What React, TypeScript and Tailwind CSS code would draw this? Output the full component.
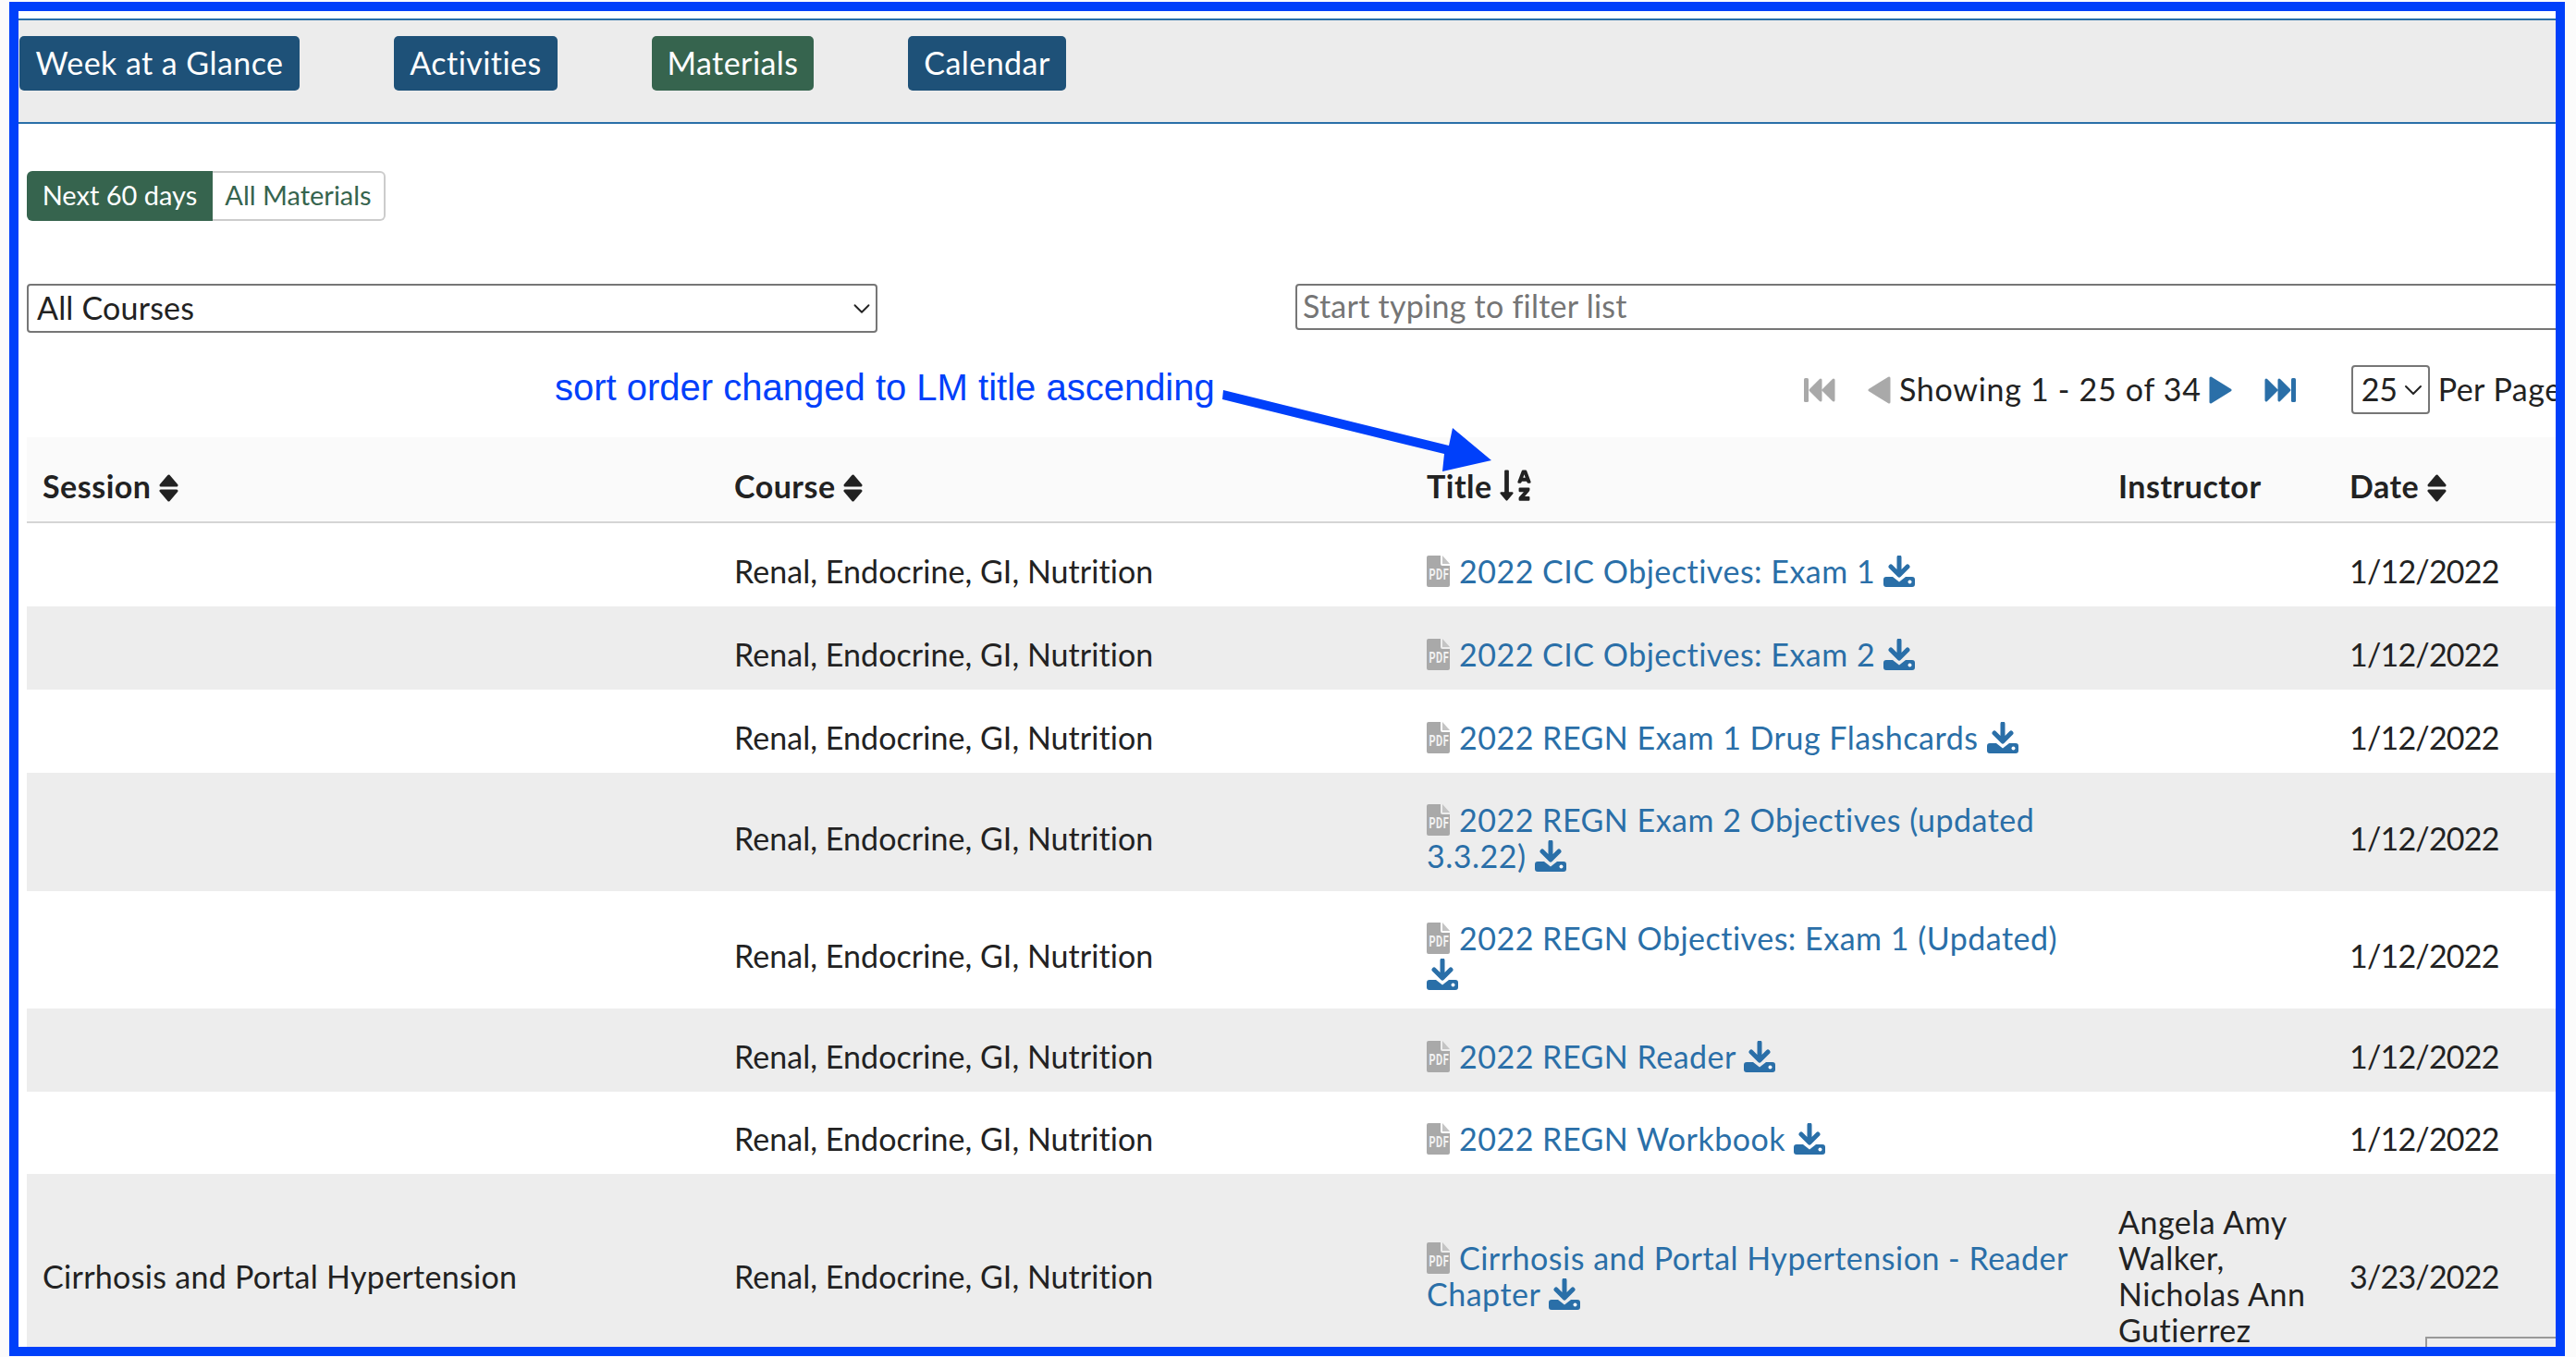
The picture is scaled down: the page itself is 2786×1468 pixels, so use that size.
import { ChevronDown } from "lucide-react"
import { FaSortAlphaDown } from "react-icons/fa"

type Row = {
  session?: string
  title: string
  instructor?: string[]
  date: string
  height: string
}

const rows: Row[] = [
  { title: "2022 CIC Objectives: Exam 1", date: "1/12/2022", height: "h-[91px]" },
  { title: "2022 CIC Objectives: Exam 2", date: "1/12/2022", height: "h-[90px]" },
  { title: "2022 REGN Exam 1 Drug Flashcards", date: "1/12/2022", height: "h-[90px]" },
  { title: "2022 REGN Exam 2 Objectives (updated 3.3.22)", date: "1/12/2022", height: "h-[128px]" },
  { title: "2022 REGN Objectives: Exam 1 (Updated)", date: "1/12/2022", height: "h-[127px]" },
  { title: "2022 REGN Reader", date: "1/12/2022", height: "h-[90px]" },
  { title: "2022 REGN Workbook", date: "1/12/2022", height: "h-[89px]" },
  {
    session: "Cirrhosis and Portal Hypertension",
    title: "Cirrhosis and Portal Hypertension - Reader Chapter",
    instructor: ["Angela Amy", "Walker,", "Nicholas Ann", "Gutierrez"],
    date: "3/23/2022",
    height: "h-[208px]",
  },
]

function PdfIcon() {
  return (
    <svg viewBox="0 0 25 34" className="mr-[10px] inline-block h-[34px] w-[25px] align-[-4px]">
      <path d="M2 0h13v9a2 2 0 0 0 2 2h8v21a2 2 0 0 1-2 2H2a2 2 0 0 1-2-2V2a2 2 0 0 1 2-2z" fill="#a9a9a9" />
      <path d="M17 0l8 9h-8z" fill="#c4c4c4" />
      <text transform="translate(2.500 26) scale(1 1.45)" fontSize="11" fontWeight="700" fill="#f2f2f2" fontFamily="Roboto, sans-serif">PDF</text>
    </svg>
  )
}

function DownloadIcon() {
  return (
    <svg viewBox="0 0 34 34" className="inline-block h-[34px] w-[34px] align-[-4px]" fill="#2a6fa8">
      <path d="M17 2v18M8 12l9 9 9-9" fill="none" stroke="#2a6fa8" strokeWidth="5" strokeLinecap="round" strokeLinejoin="round" />
      <path d="M3 23h7l7 5.500 7-5.500h7a3 3 0 0 1 3 3v5a3 3 0 0 1-3 3H3a3 3 0 0 1-3-3v-5a3 3 0 0 1 3-3z" />
      <circle cx="28.500" cy="28.500" r="2" fill="#fff" />
    </svg>
  )
}

function SortIcon() {
  return (
    <svg viewBox="0 0 21 30" className="inline-block h-[30px] w-[21px] align-[-4px]" fill="#222222">
      <path d="M10.500 2 L19 12 H2 Z M2 18 H19 L10.500 28 Z" stroke="#222222" strokeWidth="3" strokeLinejoin="round" />
    </svg>
  )
}

function Triangle({ flip, color }: { flip?: boolean; color: string }) {
  return (
    <svg viewBox="0 0 26 30" className={flip ? "h-[30px] w-[26px] rotate-180" : "h-[30px] w-[26px]"}>
      <path d="M24 2 L24 28 L3 15 Z" fill={color} stroke={color} strokeWidth="3" strokeLinejoin="round" />
    </svg>
  )
}

function SkipIcon({ flip, color }: { flip?: boolean; color: string }) {
  return (
    <svg viewBox="0 0 34 28" className={flip ? "h-[28px] w-[34px] rotate-180" : "h-[28px] w-[34px]"}>
      <rect x="0" y="1" width="5" height="26" rx="1.500" fill={color} />
      <path d="M18 3v22L7 14z M32 3v22L21 14z" fill={color} stroke={color} strokeWidth="3" strokeLinejoin="round" />
    </svg>
  )
}

export default function App() {
  return (
    <div className="relative h-[1468px] w-full overflow-hidden bg-[#fbfbfb] pt-[2px] pl-[10px] font-['Lato',sans-serif] text-[34px] text-[#222222]">
      <div className="relative h-[1465px] w-[2764px] overflow-hidden border-[10px] border-[#0040fa] bg-white pt-[8px]">
        {/* TOP NAV */}
        <nav className="flex h-[114px] gap-[102px] border-y-2 border-[#2a6fa8] bg-[#ececec] pt-[17px] pl-[1px] tracking-[0.45px]">
          <a className="flex h-[59px] w-[303px] items-center justify-center rounded-[5px] bg-[#1e5178] pb-[3px] text-white">Week at a Glance</a>
          <a className="flex h-[59px] w-[177px] items-center justify-center rounded-[5px] bg-[#1e5178] pb-[3px] text-white">Activities</a>
          <a className="flex h-[59px] w-[175px] items-center justify-center rounded-[5px] bg-[#36644e] pb-[3px] text-white">Materials</a>
          <a className="flex h-[59px] w-[171px] items-center justify-center rounded-[5px] bg-[#1e5178] pb-[3px] text-white">Calendar</a>
        </nav>

        <div className="w-[2800px] pl-[9px]">
          {/* TOGGLE */}
          <div className="mt-[51px] flex h-[54px] w-[388px] text-[29px]">
            <div className="flex w-[201px] items-center justify-center rounded-l-[6px] bg-[#36644e] pb-[3px] text-white">Next 60 days</div>
            <div className="flex flex-1 items-center justify-center rounded-r-[6px] border-2 border-l-0 border-[#cccccc] pb-[3px] text-[#36644e]">All Materials</div>
          </div>

          {/* FILTERS */}
          <div className="mt-[68px] flex h-[53px] gap-[452px]">
            <div className="flex w-[920px] items-center justify-between rounded-[4px] border-2 border-[#767676] pl-[9px]">
              <span className="pb-[3px] tracking-[0.2px]">All Courses</span>
              <ChevronDown size={30} strokeWidth={1.5} />
            </div>
            <input
              className="h-[50px] w-[1400px] rounded-[4px] border-2 border-[#767676] px-[6px] pb-[3px] tracking-[0.25px] placeholder:text-[#757575]"
              placeholder="Start typing to filter list"
            />
          </div>

          {/* PAGER */}
          <div className="mt-[35px] flex h-[53px] items-center whitespace-nowrap pl-[1922px]">
            <SkipIcon color="#a9a9a9" />
            <span className="ml-[34px]"><Triangle color="#a9a9a9" /></span>
            <span className="ml-[9px] pb-[3px] tracking-[0.7px]">Showing 1 - 25 of 34</span>
            <span className="ml-[8px]"><Triangle flip color="#2a6fa8" /></span>
            <span className="ml-[34px]"><SkipIcon flip color="#2a6fa8" /></span>
            <div className="ml-[60px] flex h-[53px] w-[85px] items-center justify-between rounded-[4px] border-2 border-[#767676] pl-[9px]">
              <span className="pb-[3px]">25</span>
              <ChevronDown size={32} strokeWidth={1.5} />
            </div>
            <span className="ml-[9px] pb-[3px] tracking-[0.5px]">Per Page</span>
          </div>

          {/* TABLE */}
          <table className="mt-[25px] w-[2795px] table-fixed border-collapse">
            <colgroup>
              <col className="w-[748px]" />
              <col className="w-[749px]" />
              <col className="w-[748px]" />
              <col className="w-[250px]" />
              <col className="w-[300px]" />
            </colgroup>
            <thead>
              <tr className="h-[92px] border-b-2 border-[#d5d5d5] bg-[#fafafa] text-left font-bold tracking-[0.5px]">
                <th className="px-[17px] pt-[14px]">Session <SortIcon /></th>
                <th className="px-[17px] pt-[14px]">Course <SortIcon /></th>
                <th className="px-[17px] pt-[14px]">Title <FaSortAlphaDown className="-ml-[2px] inline-block align-[-5px]" size={38} /></th>
                <th className="px-[17px] pt-[14px]">Instructor</th>
                <th className="px-[17px] pt-[14px]">Date <SortIcon /></th>
              </tr>
            </thead>
            <tbody>
              {rows.map((row, i) => (
                <tr key={row.title} className={`${row.height} ${i % 2 === 1 ? "bg-[#ededed]" : "bg-white"}`}>
                  <td className="px-[17px] pt-[12px] tracking-[0.3px]">{row.session}</td>
                  <td className="px-[17px] pt-[12px] tracking-[0.05px]">Renal, Endocrine, GI, Nutrition</td>
                  <td className="px-[17px] pt-[12px] leading-[39px] tracking-[0.5px] text-[#2a6fa8]">
                    <PdfIcon />
                    {row.title}{" "}
                    <DownloadIcon />
                  </td>
                  <td className="px-[17px] pt-[12px] leading-[39px] tracking-[0.5px]">
                    {row.instructor?.map((name) => <div key={name}>{name}</div>)}
                  </td>
                  <td className="px-[17px] pt-[12px] tracking-[-0.8px]">{row.date}</td>
                </tr>
              ))}
            </tbody>
          </table>
        </div>

        {/* floating box peeking out behind the frame */}
        <div className="absolute top-[1434px] right-0 h-[30px] w-[141px] border-t-2 border-l-2 border-[#999999] bg-[#eeeeee]" />
      </div>

      {/* ANNOTATION */}
      <span className="absolute top-[396px] left-[600px] whitespace-nowrap font-['Liberation_Sans',sans-serif] text-[40px] leading-[46px] text-[#0040fa]">
        sort order changed to LM title ascending
      </span>
      <svg className="absolute top-0 left-0 h-[1468px] w-[2786px]" viewBox="0 0 2786 1468">
        <path d="M1323 422 L1567 482 L1571 463 L1613 498 L1560 510 L1562 491 L1322 432 Z" fill="#0040fa" />
      </svg>
    </div>
  )
}
